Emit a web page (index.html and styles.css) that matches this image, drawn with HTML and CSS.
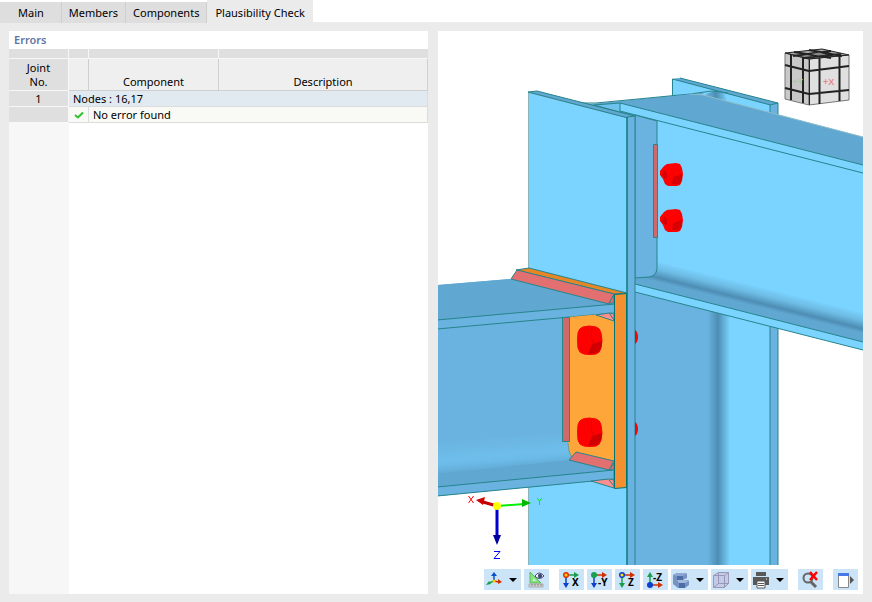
FILE: index.html
```html
<!DOCTYPE html>
<html lang="en">
<head>
<meta charset="utf-8">
<title>Plausibility Check</title>
<link rel="stylesheet" href="styles.css">
</head>
<body>
<nav class="tabs" role="tablist">
  <button class="tab tab-main" role="tab">Main</button>
  <button class="tab" role="tab">Members</button>
  <button class="tab" role="tab">Components</button>
  <button class="tab active" role="tab" aria-selected="true">Plausibility Check</button>
</nav>
<main class="workspace">
  <section class="panel errors">
    <h2 class="panel-title">Errors</h2>
    <div class="table-area">
      <table class="grid">
        <colgroup><col class="c-no"><col class="c-icon"><col class="c-comp"><col></colgroup>
        <thead>
          <tr class="strip"><td></td><td></td><td></td><td></td></tr>
          <tr class="head"><th class="rowhead">Joint<br>No.</th><th></th><th>Component</th><th>Description</th></tr>
        </thead>
        <tbody>
          <tr class="group"><th class="rowhead">1</th><td colspan="3">Nodes : 16,17</td></tr>
          <tr class="result"><th class="rowhead"></th><td class="mark"><svg width="10" height="8" viewBox="0 0 10 8"><path d="M1 4l3 2.500L9 1.500" fill="none" stroke="#2fc12f" stroke-width="2"/></svg></td><td class="msg" colspan="2">No error found</td></tr>
        </tbody>
      </table>
    </div>
  </section>
  <section class="panel view">
    <svg class="scene" viewBox="438 31 425 534" preserveAspectRatio="xMinYMin slice">
      <defs>
        <linearGradient id="fillet"><stop offset="0" stop-color="#6ab2df"/><stop offset=".45" stop-color="#4d8db3"/><stop offset="1" stop-color="#7bd3ff"/></linearGradient>
        <linearGradient id="root" gradientUnits="userSpaceOnUse" x1="750" y1="305" x2="755" y2="285"><stop offset="0" stop-color="#60a7d1"/><stop offset=".2" stop-color="#4d8db3"/><stop offset=".6" stop-color="#6dbce5"/><stop offset="1" stop-color="#7bd3ff"/></linearGradient>
        <linearGradient id="lowroot" gradientUnits="userSpaceOnUse" x1="500" y1="434" x2="503" y2="470"><stop offset="0" stop-color="#6ab2df"/><stop offset=".6" stop-color="#6ebeeb"/><stop offset=".75" stop-color="#6bb9e6"/><stop offset="1" stop-color="#60a7d1"/></linearGradient>
        <g id="nut">
          <path d="M-12-3l4-5 3-2 9-1 4 1 2 4 1 6-1 7-2 4-3 1H-4l-3-2-2-5-3-4z" fill="#f00"/>
          <path d="M1 3l9-3v4l-2 6H0z" fill="#d80000"/><path d="M-8-4l3 3v5l-2 1-3-4z" fill="#d80000"/>
        </g>
        <g id="head">
          <path d="M-12-8q1-5 5-6 6-2 13 0 4 1 5 6 2 8 0 15-1 5-5 6-6 1-12 0-5-1-6-6-1-8 0-15z" fill="#f00" stroke="#f00"/>
          <path d="M2 3l10-3-1 7-4 5-9 1z" fill="#d00000"/><path d="M2-14l-1 10 2 6" fill="none" stroke="#e40000"/>
        </g>
      </defs>
      <g class="edges">
        <!-- far column flange -->
        <path d="M672 79l8-1 98 25v40H672z" fill="#7bd3ff" stroke="none"/>
        <path d="M672 79l8-1 98 25-8 2z" fill="#60a7d1" stroke="none"/>
        <path d="M672.500 103V79l98 26M680 78l98 25" fill="none"/>
        <path d="M770 105l8-2v30h-8z" fill="#6ab2df"/>
        <path d="M706 94l8-3 10 2 4 10h-22z" fill="url(#fillet)" stroke="none"/>
        <!-- column body below the beam -->
        <path d="M635 285h75v280h-75z" fill="#6ab2df" stroke="none"/>
        <path d="M728 300h43v265h-43z" fill="#7bd3ff" stroke="none"/>
        <path d="M708 300h22v265h-22z" fill="url(#fillet)" stroke="none"/>
        <path d="M770 320h8v246h-8z" fill="#6ab2df"/>
        <!-- web top -->
        <path d="M575 101q10 4 25 2l90-9 14-1-20 12-50 12-40-10z" fill="#60a7d1" stroke="none"/>
        <path d="M594 105l26-2v10l14 4z" fill="#6fc2ee" stroke="none"/>
        <path d="M580 103h16l94-9 22-3 16 2" fill="none"/>
        <path d="M594 105l26-2M594 105l40 11" fill="none"/>
        <!-- right beam -->
        <path d="M620 103l243 62v185l-228-58V115l-15-4z" fill="#7bd3ff" stroke="none"/>
        <path d="M620 103l70-9 13 1 160 42v28z" fill="#60a7d1" stroke="none"/>
        <path d="M690 94l13 1 160 42" fill="none" stroke="#8cbcc8"/>
        <path d="M863 165L620 103v8l243 62" fill="none"/>
        <path d="M635 278l22-16 206 51v29l-228-58z" fill="url(#root)" stroke="none"/>
        <path d="M635 115l22 6v148q-1 7-8 8l-14 1z" fill="#6ab2df"/>
        <path d="M635 284l228 58M635 292l228 58" fill="none"/>
        <path d="M653.500 144.500h4v93h-4z" fill="#cf6a6a"/>
        <!-- near column flange -->
        <path d="M528.500 92.500l99 25V566h-99z" fill="#7bd3ff" stroke="#8ab5bb"/>
        <path d="M528 92l9-1 98 25-7 2z" fill="#60a7d1"/>
        <path d="M627 117l8-1v450h-8z" fill="#6ab2df"/>
        <path d="M627 117v449" fill="none" stroke="#007474"/>
        <!-- left beam -->
        <path d="M437 285l74-6 103 25v175l-177 17z" fill="#6ab2df" stroke="none"/>
        <path d="M437 285l74-6 104 25-178 16z" fill="#60a7d1" stroke="none"/>
        <path d="M437 320l178-16M437 329l177-16" fill="none"/>
        <path d="M437 442l135-10v28l42 10-177 17z" fill="url(#lowroot)" stroke="none"/>
        <path d="M437 474l134-14 43 10-177 17z" fill="#60a7d1" stroke="none"/>
        <path d="M437 487l177-17v9l-177 17z" fill="#6ab2df"/>
        <!-- end plate and welds -->
        <path d="M569 317l45-4v157l-42-11q-4-8-4-16z" fill="#ffa63a" stroke="none"/>
        <path d="M568 443q0 8 4 15" fill="none" stroke="#6c9b8b"/>
        <path d="M562.500 317.500h7v124h-7z" fill="#cf6a6a"/>
        <path d="M516 270l13-2 98 25-13 1z" fill="#e78624"/>
        <path d="M511 279l6-9 97 24-5 10z" fill="#e27070"/>
        <path d="M609 303l5-8v8z" fill="#e27070"/>
        <path d="M596 315l13-2 5 1v7z" fill="#ff8e8e"/><path d="M609 313l5 7" fill="none"/>
        <path d="M569 460l7-8 38 9-5 9z" fill="#e27070"/><path d="M609 470l5-7v6z" fill="#e27070"/>
        <path d="M591 481l18-2 5 1v8z" fill="#ff8e8e"/><path d="M609 480l5 6" fill="none"/>
        <path d="M614.500 294.500l12-1v194l-12 1z" fill="#f49030" stroke="#007474"/>
      </g>
      <use href="#nut" x="672" y="174"/><use href="#nut" x="672" y="220"/>
      <use href="#head" x="590" y="341"/><use href="#head" x="590" y="433"/>
      <path d="M635 330q3 2 3 7t-3 7zM635 422q3 2 3 7t-3 7z" fill="#f00"/>
      <!-- orientation cube -->
      <g stroke="#222" stroke-width="1" stroke-linejoin="round">
        <path d="M785 53l37-4 27 6-38 4z" fill="#aaa"/>
        <path d="M785 53l24 6v46l-24-6z" fill="#c8c8c8" stroke="#777"/>
        <path d="M809 59l40-4v45l-40 5z" fill="#e0e0e0" stroke="#777"/>
        <path d="M791 54v46M803 57v46M819.500 58v46M839.500 56v45M785 65l24 6 40-5M785 88l24 6 40-4" fill="none" stroke-width="2"/>
        <path d="M809.500 59v46M785 53l24 6 40-4" fill="none"/>
        <path d="M794 52l37 6M809 50l33 6M793 56l38-5M803 58l38-4" fill="none" stroke-width="2"/>
        <path d="M808 54l11-2 10 3-11 1z" fill="#888"/>
      </g>
      <text class="cube-x" x="823" y="85">+X</text><text class="cube-y" x="793" y="84">+Y</text>
      <!-- coordinate axes -->
      <g>
        <path d="M497 506l-14-4" stroke="#c00000" stroke-width="3"/><path d="M476 500l9-3-2 8z" fill="#d00000"/>
        <path d="M497 506l27-2" stroke="#0e0" stroke-width="2"/><path d="M531 503l-9-4v8z" fill="#00b800"/>
        <path d="M497 506v31" stroke="#00c" stroke-width="3"/><path d="M497 545l-4-10h8z" fill="#0000a0"/>
        <circle cx="497" cy="506" r="4" fill="#ff0"/>
        <g fill="none" stroke-width="1"><path d="M468.500 496l5 7M473.500 496l-5 7" stroke="#f00"/><path d="M537 498l2.500 3v4M542 498l-2.500 3" stroke="#0e0"/><path d="M494 551.500h6l-6 7h6" stroke="#00f"/></g>
      </g>
    </svg>
    <div class="toolbar" role="toolbar">
      <button class="tool wide" aria-label="Axes"><svg width="18" height="18" viewBox="0 0 18 18"><path d="M9 10V4" stroke="#0a4fd0" stroke-width="1.500"/><path d="M6 5l3-4 3 4z" fill="#0a4fd0"/><path d="M9 10l-5 2" stroke="#18a050" stroke-width="1.500"/><path d="M1 14l3-4 2 3z" fill="#18a050"/><path d="M9 10l5 1" stroke="#d03000" stroke-width="1.500"/><path d="M17 11l-4-3v5z" fill="#d03000"/><circle cx="9" cy="10" r="1.500" fill="#ffc800"/></svg><i class="caret"></i></button>
      <button class="tool" aria-label="Visibility"><svg width="18" height="18" viewBox="0 0 18 18"><path d="M2 1v11h11z" fill="#86e27c" stroke="#5cba5c"/><path d="M5 7v3h3z" fill="#d9efff"/><path d="M1 13h14v3H1z" fill="#d4d4d4" stroke="#aaa"/><path d="M4 13v2M7 13v2M10 13v2M13 13v2" stroke="#888"/><path d="M7 5q4-6 9 0-5 5-9 0z" fill="#fff" stroke="#404878"/><circle cx="12" cy="5" r="2.200" fill="#404878"/></svg></button>
      <button class="tool gap" aria-label="View in X"><svg width="18" height="18" viewBox="0 0 18 18"><path d="M3 4h8" stroke="#18a050" stroke-width="1.500"/><path d="M16 4l-5-3v6z" fill="#18a050"/><path d="M3 4v9" stroke="#0a3fd0" stroke-width="1.500"/><path d="M3 17l-3-5h6z" fill="#0a3fd0"/><circle cx="3" cy="4" r="2.300" fill="#ffd000" stroke="#e03000" stroke-width="1.500"/><text x="9" y="15">X</text></svg></button>
      <button class="tool" aria-label="View in minus Y"><svg width="18" height="18" viewBox="0 0 18 18"><path d="M3 4h8" stroke="#d03000" stroke-width="1.500"/><path d="M16 4l-5-3v6z" fill="#d03000"/><path d="M3 4v9" stroke="#0a3fd0" stroke-width="1.500"/><path d="M3 17l-3-5h6z" fill="#0a3fd0"/><circle cx="3" cy="4" r="3" fill="#18a050"/><text x="7" y="15">-Y</text></svg></button>
      <button class="tool" aria-label="View in Z"><svg width="18" height="18" viewBox="0 0 18 18"><path d="M3 4h8" stroke="#d03000" stroke-width="1.500"/><path d="M16 4l-5-3v6z" fill="#d03000"/><path d="M3 4v9" stroke="#18a050" stroke-width="1.500"/><path d="M3 17l-3-5h6z" fill="#18a050"/><circle cx="3" cy="4" r="2.300" fill="#ffe000" stroke="#0a3fd0" stroke-width="1.500"/><text x="9" y="15">Z</text></svg></button>
      <button class="tool" aria-label="View in minus Z"><svg width="18" height="18" viewBox="0 0 18 18"><path d="M3 14h8" stroke="#d03000" stroke-width="1.500"/><path d="M16 14l-5-3v6z" fill="#d03000"/><path d="M3 14V6" stroke="#18a050" stroke-width="1.500"/><path d="M3 1L0 6h6z" fill="#18a050"/><circle cx="3" cy="14" r="3" fill="#0a3fd0"/><text x="6" y="10">-Z</text></svg></button>
      <button class="tool wide" aria-label="Display style"><svg width="18" height="18" viewBox="0 0 18 18"><path d="M1 4l4-2h9l1 1v4l-4 2h5l1 1v4l-4 3H6l-5-4z" fill="#7693c4"/><path d="M1 4l4-2h10l-4 3H4z" fill="#8da7d2"/><path d="M5 5h6v4H5z" fill="#4d6da8"/><path d="M5 9h8l4 1-4 2H7z" fill="#a3b9dd"/><path d="M7 12h6v5H7z" fill="#4d6da8"/></svg><i class="caret"></i></button>
      <button class="tool wide" aria-label="Wireframe box"><svg width="18" height="18" viewBox="0 0 18 18"><path d="M1.500 4.500l5-3h10v11l-4 4h-11z" fill="#c3cbe6"/><path d="M1.500 4.500h11v12h-11zM1.500 4.500l5-3h10l-4 3M16.500 1.500v11l-4 4M6.500 1.500v11h10M6.500 12.500l-5 4" fill="none" stroke="#9a98b8"/></svg><i class="caret"></i></button>
      <button class="tool wide" aria-label="Print"><svg width="18" height="18" viewBox="0 0 18 18"><path d="M4 1h10v4H4zM1 6h16v8H1z" fill="#595959"/><path d="M5 10h8v7H5z" fill="#fff" stroke="#595959"/><path d="M6 12.500h6M6 14.500h6" stroke="#595959"/><path d="M14 8h1" stroke="#fff"/></svg><i class="caret"></i></button>
      <button class="tool gap" aria-label="Clear search"><svg width="18" height="18" viewBox="0 0 18 18"><circle cx="6" cy="7" r="4.500" fill="none" stroke="#666" stroke-width="2"/><path d="M9 11l5 5" stroke="#666" stroke-width="3"/><path d="M8 1l7 8M15 1L8 9" stroke="#f00" stroke-width="2.500"/></svg></button>
      <button class="tool gap" aria-label="Open panel"><svg width="18" height="18" viewBox="0 0 18 18"><path d="M1.500 2.500h10v14h-10z" fill="#fff" stroke="#888"/><path d="M1 2h11v3H1z" fill="#4778e8"/><path d="M13 5l4 4-4 4z" fill="#555"/></svg></button>
    </div>
  </section>
</main>
</body>
</html>
```
FILE: styles.css
```css
* { box-sizing: border-box; }

body {
  margin: 0;
  min-height: 100vh;
  display: flex;
  flex-direction: column;
  background: #ebebeb;
  color: #000;
  font: 11px/13px "Noto Sans", "Open Sans", sans-serif;
}

button {
  margin: 0;
  border: 0;
  font: inherit;
  color: inherit;
}

.tabs {
  display: flex;
  align-items: flex-end;
  height: 23px;
  background: linear-gradient(#fff 22px, #ebebeb 22px);
}

.tab {
  height: 21px;
  padding: 0 7px;
  background: #dedede;
  border-right: 1px solid #cfcfcf;
}

.tab-main { padding: 0 17px 0 18px; }

.tab.active {
  height: 23px;
  padding: 2px 8px 0;
  background: #ebebeb;
  border: 0;
}

.workspace {
  flex: 1;
  display: grid;
  grid-template-columns: 419fr 425fr;
  gap: 10px;
  padding: 8px 9px 8px 9px;
}

.panel {
  display: flex;
  flex-direction: column;
  min-width: 0;
  background: #fff;
}

.panel-title {
  margin: 0;
  padding: 2px 5px 3px;
  color: #5f77a5;
  font-size: 11px;
  font-weight: 600;
}

.table-area {
  flex: 1;
  background: linear-gradient(to right, #f7f7f7 60px, #fff 60px);
}

.grid {
  width: 100%;
  table-layout: fixed;
  border-collapse: separate;
  border-spacing: 0;
}

.c-no { width: 60px; }
.c-icon { width: 20px; }
.c-comp { width: 130px; }

.grid th,
.grid td {
  padding: 0 4px;
  font-weight: 400;
  border-right: 1px solid #dcdcdc;
  border-bottom: 1px solid #dcdcdc;
}

.grid .strip td {
  height: 10px;
  background: #dfdfdf;
  border-color: #f7f7f7;
}

.grid .strip td:last-child { border-right-color: #dfdfdf; }

.grid .head th {
  height: 32px;
  line-height: 14px;
  vertical-align: bottom;
  padding-bottom: 1px;
  background: #efefef;
  border-color: #cfcfcf;
}

.grid .group td,
.grid .result td,
.grid tbody th { height: 16px; }

.grid .group td { background: #e1eaf1; }
.grid .result td { background: #f9faf5; }

.grid .rowhead,
.grid .head .rowhead {
  background: #dfdfdf;
  border-color: #f7f7f7;
}

.grid .mark {
  padding: 0;
  text-align: center;
}

.mark svg { display: block; margin: 0 auto; }

.view { min-height: 0; }

.scene {
  display: block;
  flex: 1;
  width: 100%;
  min-height: 0;
}

.edges { stroke: #26858c; stroke-width: 1; }

.cube-x, .cube-y { font: 700 9px "Liberation Sans", sans-serif; }
.cube-x { fill: #e78a8a; }
.cube-y { fill: #a5cda5; font-size: 8px; }

.toolbar {
  display: flex;
  justify-content: flex-end;
  gap: 3px;
  padding: 4px 5px 4px;
}

.tool {
  display: flex;
  align-items: center;
  justify-content: center;
  width: 25px;
  height: 21px;
  padding: 0;
  background: #cce4f7;
}

.tool.wide {
  width: 37px;
  justify-content: space-between;
  padding: 0 4px 0 1px;
}

.tool.gap { margin-left: 7px; }

.tool text { font: 700 10px "Noto Sans", sans-serif; }

.caret {
  border: 4px solid transparent;
  border-top: 4px solid #000;
  border-bottom: 0;
}
```
